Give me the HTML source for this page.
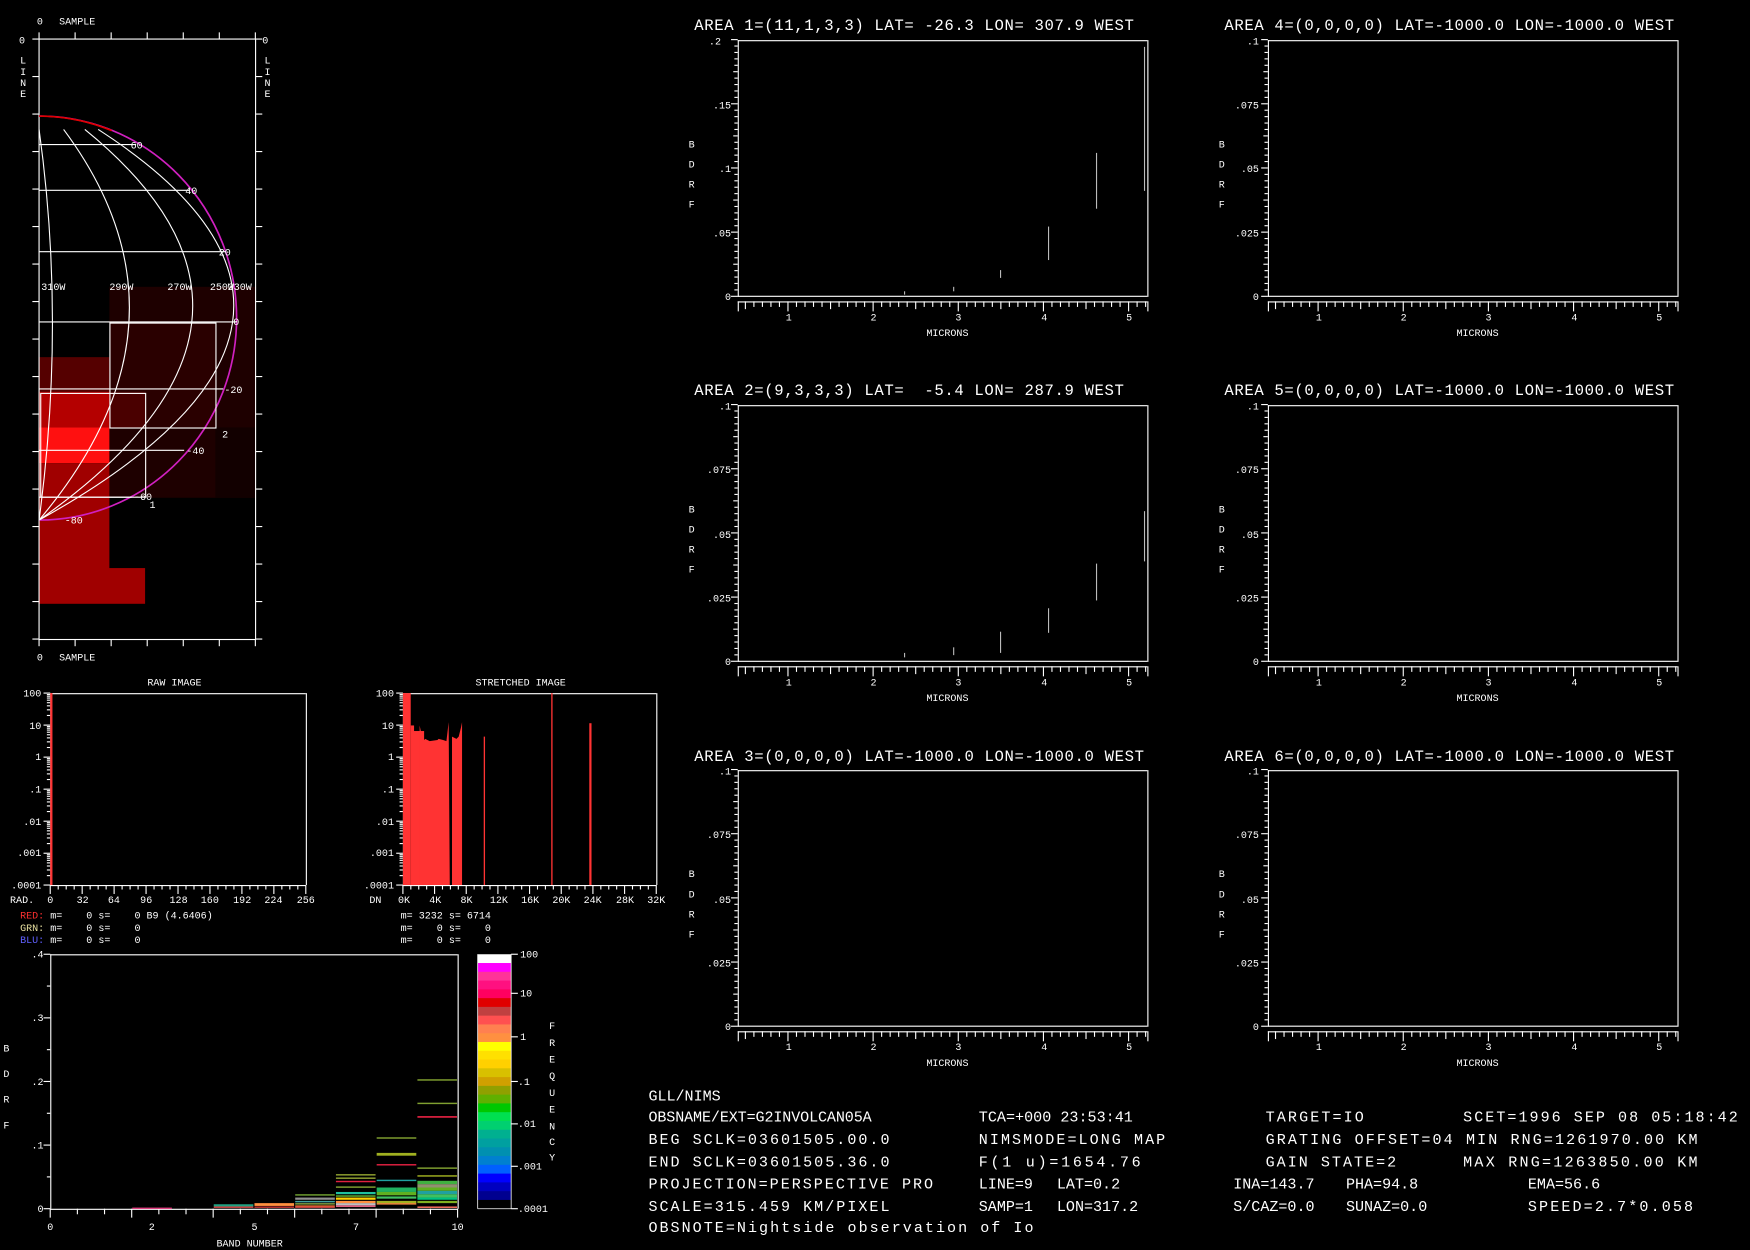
<!DOCTYPE html>
<html><head><meta charset="utf-8"><style>
html,body{margin:0;padding:0;background:#000;width:1750px;height:1250px;overflow:hidden}
svg{display:block}
text{font-family:"Liberation Mono","DejaVu Sans Mono",monospace;fill:#fff;white-space:pre}
.s{font-size:9px}.m{font-size:10px}.t{font-size:14px}.b{font-size:13.5px}
</style></head><body>
<svg id="sv" width="1750" height="1250" viewBox="0 0 1568 1120" xmlns="http://www.w3.org/2000/svg" xml:space="preserve">
<rect width="1568" height="1120" fill="#000"/>
<g id="map">
<rect x="98" y="257" width="131" height="189" fill="#1e0000"/>
<rect x="98" y="289" width="95" height="94" fill="#2a0000"/>
<rect x="193" y="383" width="36" height="63" fill="#120000"/>
<rect x="35" y="320" width="63" height="31" fill="#550000"/>
<rect x="98" y="351" width="32" height="32" fill="#4a0000"/>
<rect x="35" y="351" width="63" height="32" fill="#b40000"/>
<rect x="35" y="383" width="63" height="32" fill="#ff1010"/>
<rect x="35" y="415" width="63" height="95" fill="#a00000"/>
<rect x="35" y="509" width="95" height="32" fill="#a00000"/>
<rect x="35" y="35" width="194" height="538" fill="none" stroke="#fff" stroke-width="1"/>
<path d="M35 466 A177 181 0 0 0 35 104" fill="none" stroke="#d020c0" stroke-width="1.5"/>
<path d="M35 104 A177 181 0 0 1 100 117" fill="none" stroke="#e00000" stroke-width="1.5"/>
<g stroke="#fff" fill="none" stroke-width="1">
<path d="M35 116 Q59 288 35 466"/>
<path d="M57 116 Q185 288 35 466"/>
<path d="M76 116 Q288 288 35 466"/>
<path d="M88 116 Q355 288 35 466"/>
<line x1="35" y1="129.5" x2="122" y2="129.5"/>
<line x1="35" y1="170.5" x2="170" y2="170.5"/>
<line x1="35" y1="225.5" x2="202" y2="225.5"/>
<line x1="35" y1="288.5" x2="212" y2="288.5"/>
<line x1="35" y1="348.5" x2="200" y2="348.5"/>
<line x1="35" y1="403.5" x2="165" y2="403.5"/>
<line x1="35" y1="445.5" x2="118" y2="445.5"/>
<rect x="98.5" y="289.5" width="95" height="94"/>
<rect x="36.5" y="352.5" width="94" height="93"/>
</g>
<g class="s">
<text x="117" y="133">60</text><text x="166" y="174">40</text><text x="196" y="229">20</text>
<text x="209" y="291">0</text><text x="201" y="352">-20</text><text x="167" y="407">-40</text>
<text x="120" y="448">-60</text><text x="58" y="469">-80</text>
<text x="199" y="392">2</text><text x="134" y="455">1</text>
<text x="37" y="260">310W</text><text x="98" y="260">290W</text><text x="150" y="260">270W</text><text x="188" y="260">250W</text><text x="204" y="260">230W</text>
<text x="33" y="22">0</text><text x="53" y="22">SAMPLE</text>
<text x="33" y="592">0</text><text x="53" y="592">SAMPLE</text>
<text x="17" y="39">0</text><text x="235" y="39">0</text>
<text x="18" y="57">L</text><text x="18" y="67">I</text><text x="18" y="77">N</text><text x="18" y="87">E</text>
<text x="237" y="57">L</text><text x="237" y="67">I</text><text x="237" y="77">N</text><text x="237" y="87">E</text>
</g>
</g>
<g id="dyn"></g>
<g class="t">
<text x="622" y="27" textLength="394">AREA 1=(11,1,3,3) LAT= -26.3 LON= 307.9 WEST</text>
<text x="1097" y="27" textLength="403">AREA 4=(0,0,0,0) LAT=-1000.0 LON=-1000.0 WEST</text>
<text x="622" y="354" textLength="385">AREA 2=(9,3,3,3) LAT=  -5.4 LON= 287.9 WEST</text>
<text x="1097" y="354" textLength="403">AREA 5=(0,0,0,0) LAT=-1000.0 LON=-1000.0 WEST</text>
<text x="622" y="682" textLength="403">AREA 3=(0,0,0,0) LAT=-1000.0 LON=-1000.0 WEST</text>
<text x="1097" y="682" textLength="403">AREA 6=(0,0,0,0) LAT=-1000.0 LON=-1000.0 WEST</text>
</g>
<g class="s">
<text x="646" y="40" text-anchor="end">.2</text><text x="655" y="97" text-anchor="end">.15</text><text x="655" y="154" text-anchor="end">.1</text><text x="655" y="212" text-anchor="end">.05</text><text x="655" y="269" text-anchor="end">0</text>
<text x="1128" y="40" text-anchor="end">.1</text><text x="1128" y="97" text-anchor="end">.075</text><text x="1128" y="154" text-anchor="end">.05</text><text x="1128" y="212" text-anchor="end">.025</text><text x="1128" y="269" text-anchor="end">0</text>
<text x="655" y="367" text-anchor="end">.1</text><text x="655" y="424" text-anchor="end">.075</text><text x="655" y="482" text-anchor="end">.05</text><text x="655" y="539" text-anchor="end">.025</text><text x="655" y="596" text-anchor="end">0</text>
<text x="1128" y="367" text-anchor="end">.1</text><text x="1128" y="424" text-anchor="end">.075</text><text x="1128" y="482" text-anchor="end">.05</text><text x="1128" y="539" text-anchor="end">.025</text><text x="1128" y="596" text-anchor="end">0</text>
<text x="655" y="694" text-anchor="end">.1</text><text x="655" y="751" text-anchor="end">.075</text><text x="655" y="809" text-anchor="end">.05</text><text x="655" y="866" text-anchor="end">.025</text><text x="655" y="923" text-anchor="end">0</text>
<text x="1128" y="694" text-anchor="end">.1</text><text x="1128" y="751" text-anchor="end">.075</text><text x="1128" y="809" text-anchor="end">.05</text><text x="1128" y="866" text-anchor="end">.025</text><text x="1128" y="923" text-anchor="end">0</text>
</g>
<g class="s">
<text x="617" y="132">B</text><text x="617" y="150">D</text><text x="617" y="168">R</text><text x="617" y="186">F</text>
<text x="1092" y="132">B</text><text x="1092" y="150">D</text><text x="1092" y="168">R</text><text x="1092" y="186">F</text>
<text x="617" y="459">B</text><text x="617" y="477">D</text><text x="617" y="495">R</text><text x="617" y="513">F</text>
<text x="1092" y="459">B</text><text x="1092" y="477">D</text><text x="1092" y="495">R</text><text x="1092" y="513">F</text>
<text x="617" y="786">B</text><text x="617" y="804">D</text><text x="617" y="822">R</text><text x="617" y="840">F</text>
<text x="1092" y="786">B</text><text x="1092" y="804">D</text><text x="1092" y="822">R</text><text x="1092" y="840">F</text>
</g>
<g class="s">
<text x="704" y="287">1</text><text x="780" y="287">2</text><text x="856" y="287">3</text><text x="933" y="287">4</text><text x="1009" y="287">5</text><text x="830" y="301">MICRONS</text>
<text x="1179" y="287">1</text><text x="1255" y="287">2</text><text x="1331" y="287">3</text><text x="1408" y="287">4</text><text x="1484" y="287">5</text><text x="1305" y="301">MICRONS</text>
<text x="704" y="614">1</text><text x="780" y="614">2</text><text x="856" y="614">3</text><text x="933" y="614">4</text><text x="1009" y="614">5</text><text x="830" y="628">MICRONS</text>
<text x="1179" y="614">1</text><text x="1255" y="614">2</text><text x="1331" y="614">3</text><text x="1408" y="614">4</text><text x="1484" y="614">5</text><text x="1305" y="628">MICRONS</text>
<text x="704" y="941">1</text><text x="780" y="941">2</text><text x="856" y="941">3</text><text x="933" y="941">4</text><text x="1009" y="941">5</text><text x="830" y="955">MICRONS</text>
<text x="1179" y="941">1</text><text x="1255" y="941">2</text><text x="1331" y="941">3</text><text x="1408" y="941">4</text><text x="1484" y="941">5</text><text x="1305" y="955">MICRONS</text>
</g>
<g class="s">
<text x="132" y="614">RAW IMAGE</text><text x="426" y="614">STRETCHED IMAGE</text>
<text x="37" y="624" text-anchor="end">100</text><text x="37" y="653" text-anchor="end">10</text><text x="37" y="681" text-anchor="end">1</text><text x="37" y="710" text-anchor="end">.1</text><text x="37" y="739" text-anchor="end">.01</text><text x="37" y="767" text-anchor="end">.001</text><text x="37" y="796" text-anchor="end">.0001</text>
<text x="353" y="624" text-anchor="end">100</text><text x="353" y="653" text-anchor="end">10</text><text x="353" y="681" text-anchor="end">1</text><text x="353" y="710" text-anchor="end">.1</text><text x="353" y="739" text-anchor="end">.01</text><text x="353" y="767" text-anchor="end">.001</text><text x="353" y="796" text-anchor="end">.0001</text>
<text x="9" y="809">RAD.</text>
<text x="45" y="809" text-anchor="middle">0</text><text x="74" y="809" text-anchor="middle">32</text><text x="102" y="809" text-anchor="middle">64</text><text x="131" y="809" text-anchor="middle">96</text><text x="160" y="809" text-anchor="middle">128</text><text x="188" y="809" text-anchor="middle">160</text><text x="217" y="809" text-anchor="middle">192</text><text x="245" y="809" text-anchor="middle">224</text><text x="274" y="809" text-anchor="middle">256</text>
<text x="331" y="809">DN</text>
<text x="362" y="809" text-anchor="middle">0K</text><text x="390" y="809" text-anchor="middle">4K</text><text x="418" y="809" text-anchor="middle">8K</text><text x="447" y="809" text-anchor="middle">12K</text><text x="475" y="809" text-anchor="middle">16K</text><text x="503" y="809" text-anchor="middle">20K</text><text x="531" y="809" text-anchor="middle">24K</text><text x="560" y="809" text-anchor="middle">28K</text><text x="588" y="809" text-anchor="middle">32K</text>
<text x="18" y="823"><tspan fill="#ff3030">RED:</tspan> m=    0 s=    0 B9 (4.6406)</text>
<text x="18" y="834"><tspan fill="#e8e0a0">GRN:</tspan> m=    0 s=    0</text>
<text x="18" y="845"><tspan fill="#6060ff">BLU:</tspan> m=    0 s=    0</text>
<text x="359" y="823">m= 3232 s= 6714</text>
<text x="359" y="834">m=    0 s=    0</text>
<text x="359" y="845">m=    0 s=    0</text>
</g>
<g class="s">
<text x="39" y="858" text-anchor="end">.4</text><text x="39" y="915" text-anchor="end">.3</text><text x="39" y="972" text-anchor="end">.2</text><text x="39" y="1029" text-anchor="end">.1</text><text x="39" y="1086" text-anchor="end">0</text>
<text x="3" y="942">B</text><text x="3" y="965">D</text><text x="3" y="988">R</text><text x="3" y="1011">F</text>
<text x="45" y="1102" text-anchor="middle">0</text><text x="136" y="1102" text-anchor="middle">2</text><text x="228" y="1102" text-anchor="middle">5</text><text x="319" y="1102" text-anchor="middle">7</text><text x="410" y="1102" text-anchor="middle">10</text>
<text x="194" y="1117">BAND NUMBER</text>
<text x="466" y="858">100</text><text x="466" y="893">10</text><text x="466" y="932">1</text><text x="464" y="972">.1</text><text x="464" y="1010">.01</text><text x="464" y="1048">.001</text><text x="464" y="1086">.0001</text>
<text x="492" y="922">F</text><text x="492" y="937">R</text><text x="492" y="952">E</text><text x="492" y="967">Q</text><text x="492" y="982">U</text><text x="492" y="997">E</text><text x="492" y="1012">N</text><text x="492" y="1026">C</text><text x="492" y="1040">Y</text>
</g>
<g class="b">
<text x="581" y="986">GLL/NIMS</text>
<text x="581" y="1005" textLength="200">OBSNAME/EXT=G2INVOLCAN05A</text>
<text x="877" y="1005" textLength="138">TCA=+000 23:53:41</text>
<text x="1134" y="1005" textLength="88">TARGET=IO</text>
<text x="1311" y="1005" textLength="246">SCET=1996 SEP 08 05:18:42</text>
<text x="581" y="1025" textLength="216">BEG SCLK=03601505.00.0</text>
<text x="877" y="1025" textLength="167">NIMSMODE=LONG MAP</text>
<text x="1134" y="1025" textLength="387">GRATING OFFSET=04 MIN RNG=1261970.00 KM</text>
<text x="581" y="1045" textLength="216">END SCLK=03601505.36.0</text>
<text x="877" y="1045" textLength="145">F(1 u)=1654.76</text>
<text x="1134" y="1045" textLength="117">GAIN STATE=2</text>
<text x="1311" y="1045" textLength="210">MAX RNG=1263850.00 KM</text>
<text x="581" y="1065" textLength="255">PROJECTION=PERSPECTIVE PRO</text>
<text x="877" y="1065">LINE=9</text><text x="947" y="1065">LAT=0.2</text><text x="1105" y="1065">INA=143.7</text><text x="1206" y="1065">PHA=94.8</text><text x="1369" y="1065">EMA=56.6</text>
<text x="581" y="1085" textLength="216">SCALE=315.459 KM/PIXEL</text>
<text x="877" y="1085">SAMP=1</text><text x="947" y="1085">LON=317.2</text><text x="1105" y="1085">S/CAZ=0.0</text><text x="1206" y="1085">SUNAZ=0.0</text><text x="1369" y="1085" textLength="148">SPEED=2.7*0.058</text>
<text x="581" y="1104" textLength="345">OBSNOTE=Nightside observation of Io</text>
</g>
</svg>
<script>
var g=document.getElementById('dyn'),NS='http://www.w3.org/2000/svg';
function L(x1,y1,x2,y2,c,w){var e=document.createElementNS(NS,'line');e.setAttribute('x1',x1);e.setAttribute('y1',y1);e.setAttribute('x2',x2);e.setAttribute('y2',y2);e.setAttribute('stroke',c||'#fff');e.setAttribute('stroke-width',w||1);g.appendChild(e);}
function R(x,y,w,h,c){var e=document.createElementNS(NS,'rect');e.setAttribute('x',x);e.setAttribute('y',y);e.setAttribute('width',w);e.setAttribute('height',h);e.setAttribute('fill',c);g.appendChild(e);}
for(var i=0;i<=6;i++){var x=35+i*32.3;L(x,29,x,35);L(x,573,x,579);}
for(var i=0;i<=16;i++){var y=35+i*33.6;L(29,y,35,y);L(229,y,235,y);}
var cols=[661,1136],rows=[36,363,690];
rows.forEach(function(Y){cols.forEach(function(X){
 R(X,Y,367,230,'#000');
 L(X,Y+.5,X+367,Y+.5);L(X+367.5,Y,X+367.5,Y+230);L(X+.5,Y,X+.5,Y+230);L(X,Y+229.5,X+367,Y+229.5);
 for(var k=0;k<=40;k++){var y=Y+229.5-k*230/40;var len=k%10==0?6:(k%5==0?4:3);L(X-len,y,X,y);}
 L(X,Y+234.5,X+367,Y+234.5);
 for(var m=5;m<=52;m++){var x=X+(m/10-0.41)*76.3;if(x>X+368)break;var len=(m%10==0)?9:(m%5==0?7:5);L(x,Y+234,x,Y+234+len);}
 L(X+.5,Y+234,X+.5,Y+243);L(X+367.5,Y+234,X+367.5,Y+243);
});});
[[1025,42,171],[982,137,187],[939,203,233],[896,242,249],[854,257,261],[810,261,264]].forEach(function(d){L(d[0]+.5,d[1],d[0]+.5,d[2],'#bbb');});
[[1025,458,503],[982,505,538],[939,545,567],[896,566,585],[854,580,587],[810,585,589]].forEach(function(d){L(d[0]+.5,d[1],d[0]+.5,d[2],'#bbb');});
[[45,274],[361,588]].forEach(function(h){var X=h[0],W=h[1]-h[0];
 L(X,621.5,X+W,621.5);L(X+W+.5,621,X+W+.5,793);L(X+.5,621,X+.5,793);L(X,793.5,X+W,793.5);
 for(var d=0;d<6;d++){var y0=621+d*28.7;L(X-6,y0,X,y0);for(var j=2;j<10;j++){var y=y0+28.7*(1-Math.log10(j));L(X-3,y,X,y);}}L(X-6,793,X,793);
 for(var k=0;k<=32;k++){var x=X+k*W/32;L(x,793,x,k%4==0?801:797);}
});
R(45,621,2,172,'#ff3333');
var st='#ff3333';
R(361,621,7,172,st);R(368,650,3,143,st);
R(369,655,11,138,st);
var pts='376,793 376,650 379,664 381,662 385,664 392,663 393,662 397,663 400,664 402,647 403,793';
var p=document.createElementNS(NS,'polygon');p.setAttribute('points',pts);p.setAttribute('fill',st);g.appendChild(p);
var p2=document.createElementNS(NS,'polygon');p2.setAttribute('points','405,793 405,660 409,662 411,660 413,652 414,647 414,793');p2.setAttribute('fill',st);g.appendChild(p2);
L(434,660,434,793,st,1.2);L(494.5,621,494.5,793,st,1.2);R(528,648,2,145,st);
var BX=45,BY=855,BW=365,BH=228;
L(BX,BY+.5,BX+BW,BY+.5);L(BX+BW+.5,BY,BX+BW+.5,BY+BH);L(BX+.5,BY,BX+.5,BY+BH);L(BX,BY+BH+.5,BX+BW,BY+BH+.5);
for(var k=0;k<=8;k++){var y=BY+k*BH/8;L(BX-(k%2==0?6:3),y,BX,y);}
for(var k=0;k<=15;k++){var x=BX+k*BW/15;L(x,BY+BH,x,BY+BH+(k%3==0?8:5));}
var cw=36.5;function band(i,y,c,h){R(BX+cw*i+0.5,y,cw-1,h||1.3,c);}
band(2,1082,'#e04080');
band(4,1079,'#20a080',2);band(5,1078,'#ff9040',2.5);band(4,1081,'#d04040');band(5,1081,'#c03030');
band(6,1070,'#70a030');band(6,1073,'#909090',2);band(6,1076,'#40a0a0');band(6,1078,'#80a040');band(6,1080,'#e07030');band(6,1081,'#d04040');
band(7,1052,'#90a030');band(7,1055,'#90a030');band(7,1058,'#e02040');band(7,1063,'#80a030');band(7,1068,'#20c0a0',2);band(7,1071,'#60b030');band(7,1073,'#ffd000',2);band(7,1076,'#ff9040',2);band(7,1078,'#c0c0c0',2);band(7,1080,'#e06080',1.5);
band(8,1019,'#80a030');band(8,1033,'#a0b020',2.5);band(8,1043,'#e02040');band(8,1057,'#20a0a0');band(8,1064,'#20b060',4);band(8,1068,'#60b020',3);band(8,1072,'#40c060',2);band(8,1076,'#a0b020',2);band(8,1078,'#ff9040');
band(9,967,'#80a030');band(9,988,'#80a030');band(9,1000,'#e02040',1.5);band(9,1046,'#80a030');band(9,1053,'#a0b020');band(9,1058,'#40b040',3);band(9,1061,'#909070',3);band(9,1064,'#60b020',3);band(9,1067,'#20a0a0',3);band(9,1070,'#40c060',3);band(9,1073,'#00c080',2);band(9,1076,'#80b020',2);band(9,1081,'#ff7060');
var cc=['#ffffff','#ff00ff','#ff3399','#ff1080','#ff0060','#e00000','#c04040','#ff5050','#ff8050','#ff9040','#ffff00','#ffe000','#ffd000','#d8c000','#d0a000','#90a000','#60b000','#00c800','#00e050','#00d070','#00b090','#00a0a0','#0090b0','#0080d0','#0060ff','#0000ff','#0000c0','#000090','#000000'];
var ch=228/cc.length;cc.forEach(function(c,i){R(428,855+i*ch,30,ch+0.5,c);});
L(428,855,428,1083,'#fff',0.7);L(458,855,458,1083,'#fff',0.7);L(428,1083,458,1083,'#fff',0.7);
[855,890,929,969,1007,1045,1083].forEach(function(y){L(458,y,464,y);});
</script>
</body></html>
